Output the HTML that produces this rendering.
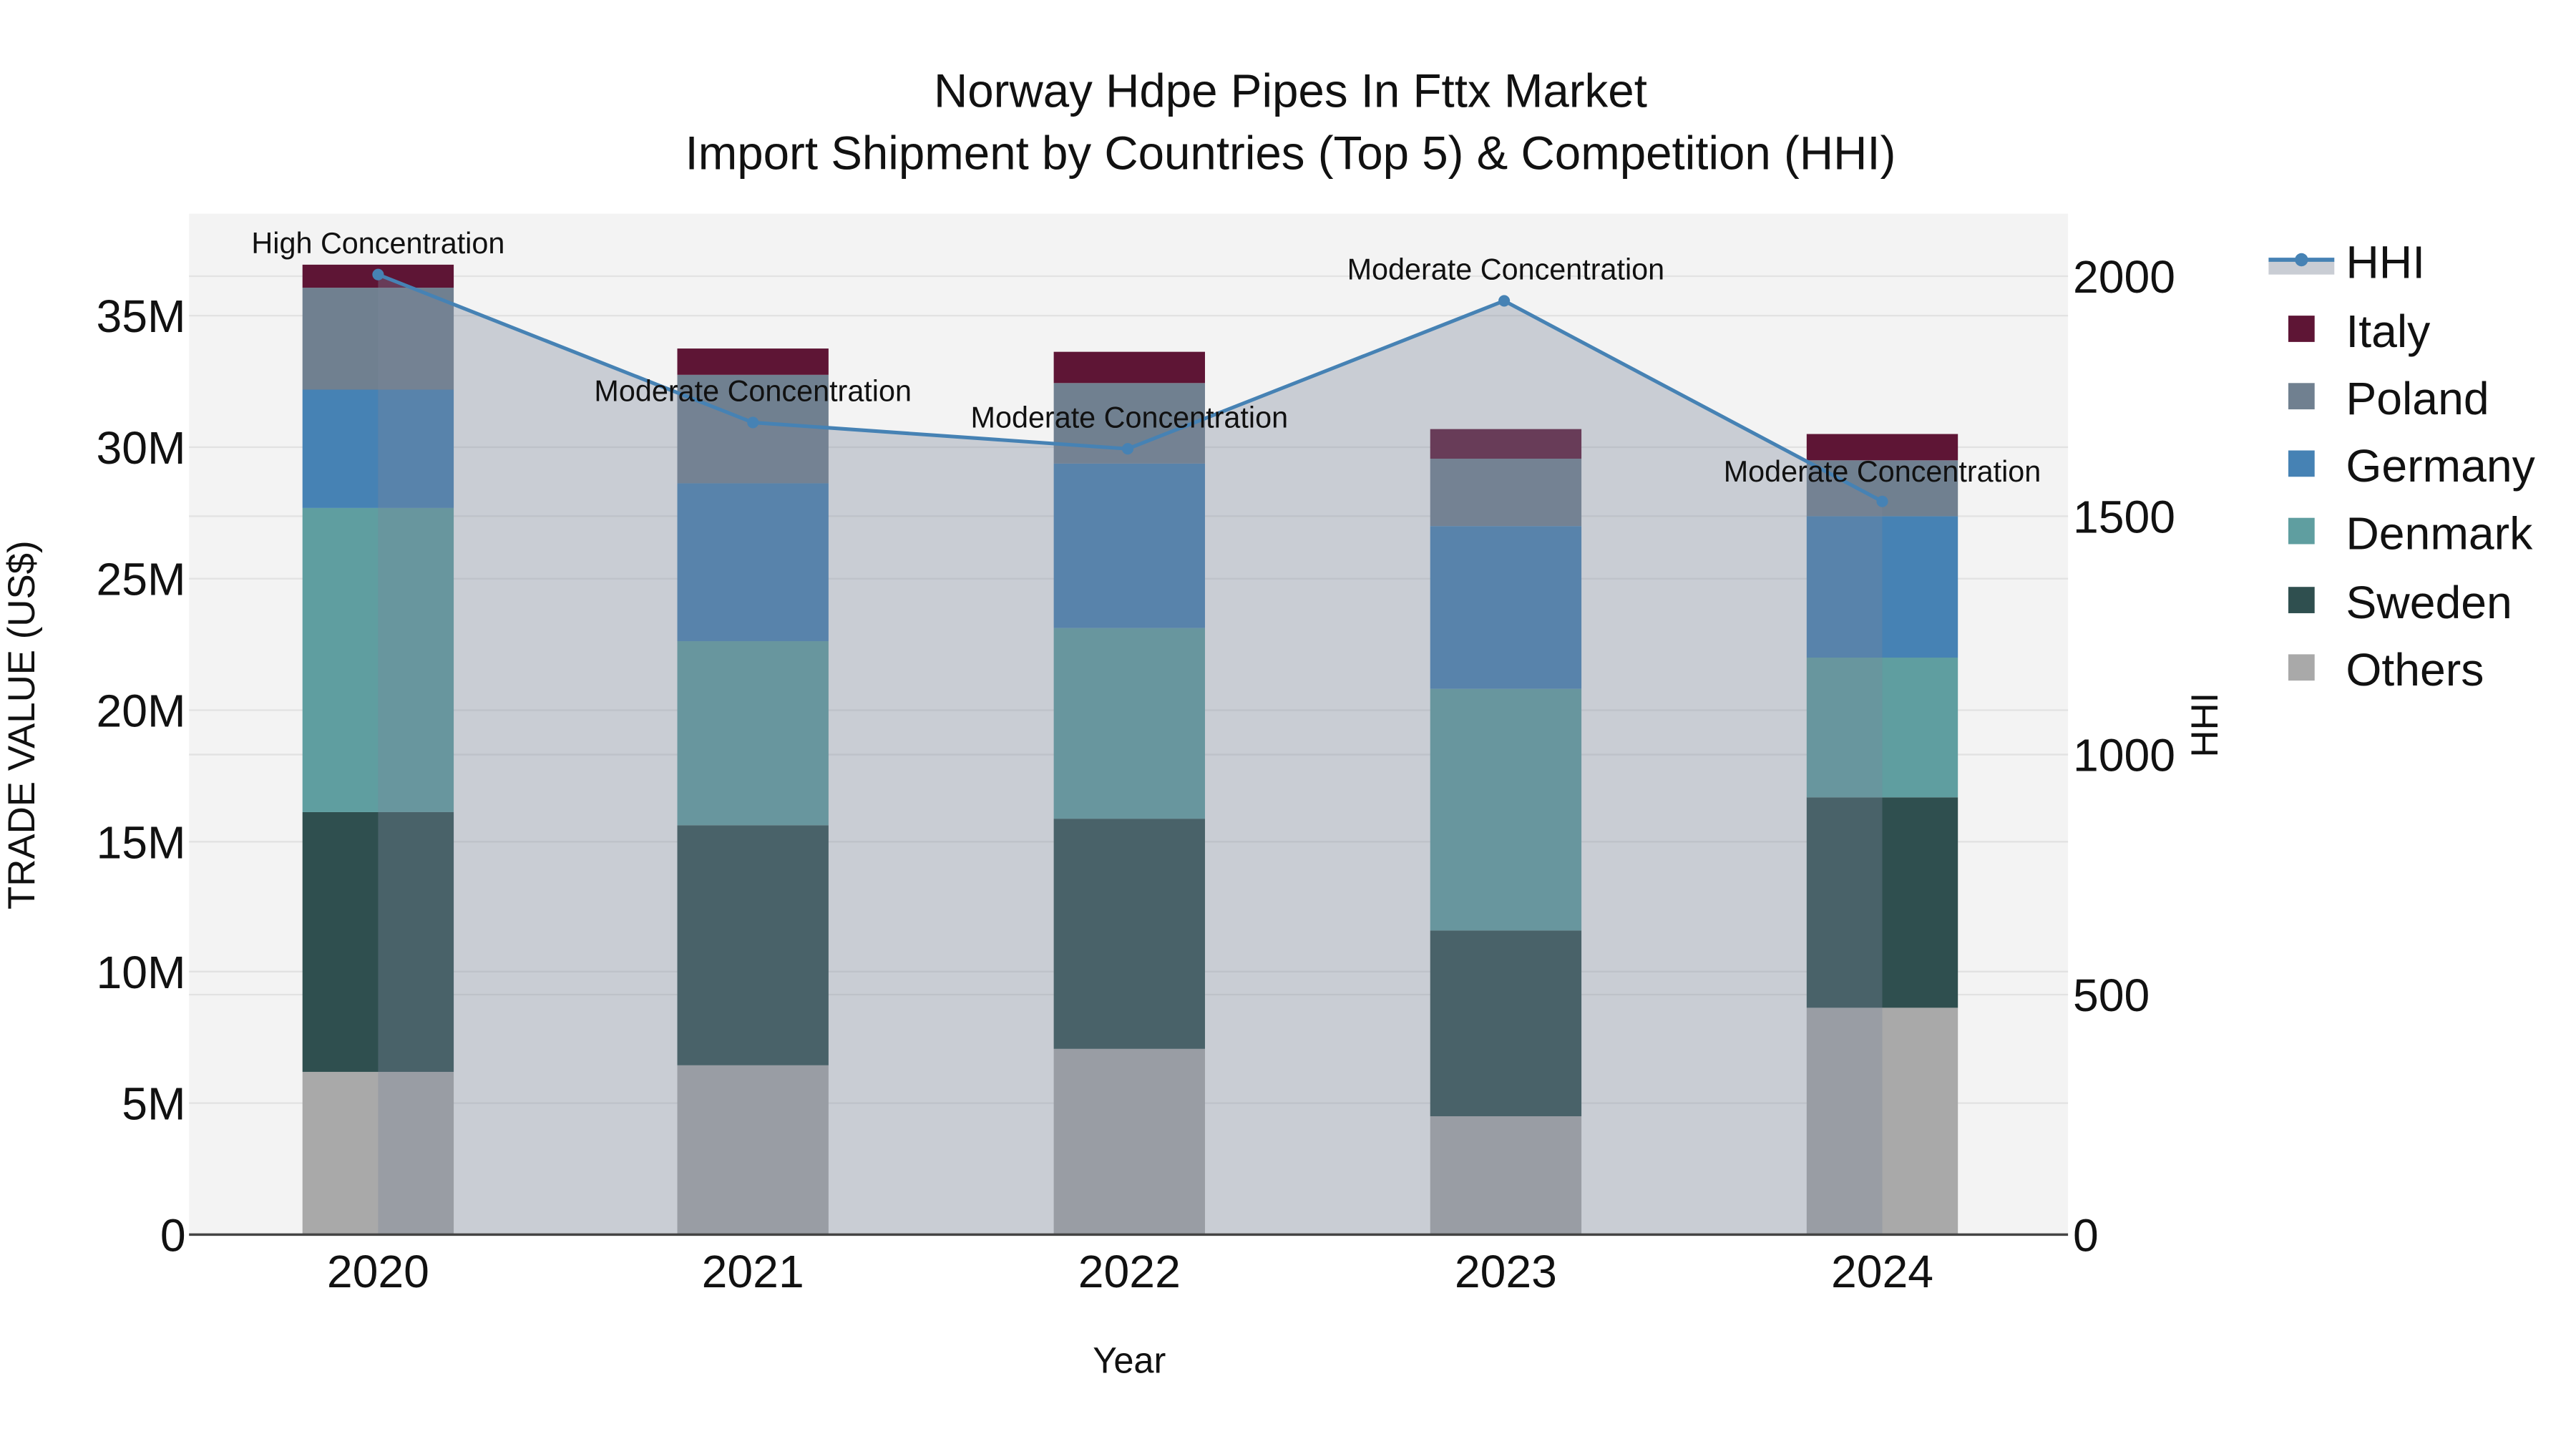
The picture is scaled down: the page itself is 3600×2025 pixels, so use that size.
<!DOCTYPE html>
<html><head><meta charset="utf-8"><style>html,body{margin:0;padding:0;background:#fff}svg{display:block}text{font-family:"Liberation Sans",sans-serif;fill:#111}</style></head>
<body>
<svg width="3600" height="2025" viewBox="0 0 1567 881.4" preserveAspectRatio="none" xmlns="http://www.w3.org/2000/svg">
<rect x="0" y="0" width="1567" height="881.4" fill="#fff"/>
<rect x="115" y="130" width="1143" height="621" fill="#f3f3f3"/>
<g stroke="#e2e2e2" stroke-width="1">
<line x1="115" y1="671" x2="1258" y2="671"/><line x1="115" y1="591" x2="1258" y2="591"/><line x1="115" y1="512" x2="1258" y2="512"/><line x1="115" y1="432" x2="1258" y2="432"/><line x1="115" y1="352" x2="1258" y2="352"/><line x1="115" y1="272" x2="1258" y2="272"/><line x1="115" y1="192" x2="1258" y2="192"/>
<line x1="115" y1="605" x2="1258" y2="605"/><line x1="115" y1="459" x2="1258" y2="459"/><line x1="115" y1="314" x2="1258" y2="314"/><line x1="115" y1="168" x2="1258" y2="168"/>
</g>
<g>
<rect x="184" y="652" width="92" height="99" fill="#a9a9a9"/><rect x="184" y="494" width="92" height="158" fill="#2f4f4f"/><rect x="184" y="309" width="92" height="185" fill="#5f9ea0"/><rect x="184" y="237" width="92" height="72" fill="#4682b4"/><rect x="184" y="175" width="92" height="62" fill="#708090"/><rect x="184" y="161" width="92" height="14" fill="#5e1535"/>
<rect x="412" y="648" width="92" height="103" fill="#a9a9a9"/><rect x="412" y="502" width="92" height="146" fill="#2f4f4f"/><rect x="412" y="390" width="92" height="112" fill="#5f9ea0"/><rect x="412" y="294" width="92" height="96" fill="#4682b4"/><rect x="412" y="228" width="92" height="66" fill="#708090"/><rect x="412" y="212" width="92" height="16" fill="#5e1535"/>
<rect x="641" y="638" width="92" height="113" fill="#a9a9a9"/><rect x="641" y="498" width="92" height="140" fill="#2f4f4f"/><rect x="641" y="382" width="92" height="116" fill="#5f9ea0"/><rect x="641" y="282" width="92" height="100" fill="#4682b4"/><rect x="641" y="233" width="92" height="49" fill="#708090"/><rect x="641" y="214" width="92" height="19" fill="#5e1535"/>
<rect x="870" y="679" width="92" height="72" fill="#a9a9a9"/><rect x="870" y="566" width="92" height="113" fill="#2f4f4f"/><rect x="870" y="419" width="92" height="147" fill="#5f9ea0"/><rect x="870" y="320" width="92" height="99" fill="#4682b4"/><rect x="870" y="279" width="92" height="41" fill="#708090"/><rect x="870" y="261" width="92" height="18" fill="#5e1535"/>
<rect x="1099" y="613" width="92" height="138" fill="#a9a9a9"/><rect x="1099" y="485" width="92" height="128" fill="#2f4f4f"/><rect x="1099" y="400" width="92" height="85" fill="#5f9ea0"/><rect x="1099" y="314" width="92" height="86" fill="#4682b4"/><rect x="1099" y="280" width="92" height="34" fill="#708090"/><rect x="1099" y="264" width="92" height="16" fill="#5e1535"/>
</g>
<polygon points="230,751 230,167 458,257 686,273 915,183 1145,305 1145,751" fill="rgba(123,134,154,0.35)"/>
<polyline points="230,167 458,257 686,273 915,183 1145,305" fill="none" stroke="#4682b4" stroke-width="2.2"/>
<g fill="#4682b4"><circle cx="230" cy="167" r="3.5"/><circle cx="458" cy="257" r="3.5"/><circle cx="686" cy="273" r="3.5"/><circle cx="915" cy="183" r="3.5"/><circle cx="1145" cy="305" r="3.5"/></g>
<line x1="115" y1="751" x2="1258" y2="751" stroke="#444" stroke-width="1.5"/>
<g font-size="18" text-anchor="middle">
<text x="230" y="154">High Concentration</text>
<text x="458" y="244">Moderate Concentration</text>
<text x="687" y="260">Moderate Concentration</text>
<text x="916" y="170">Moderate Concentration</text>
<text x="1145" y="293">Moderate Concentration</text>
</g>
<g font-size="28" text-anchor="end">
<text x="113" y="761">0</text><text x="113" y="681">5M</text><text x="113" y="601">10M</text><text x="113" y="522">15M</text><text x="113" y="442">20M</text><text x="113" y="362">25M</text><text x="113" y="282">30M</text><text x="113" y="202">35M</text>
</g>
<g font-size="28">
<text x="1261" y="761">0</text><text x="1261" y="615">500</text><text x="1261" y="469">1000</text><text x="1261" y="324">1500</text><text x="1261" y="178">2000</text>
</g>
<g font-size="28" text-anchor="middle">
<text x="230" y="783">2020</text><text x="458" y="783">2021</text><text x="687" y="783">2022</text><text x="916" y="783">2023</text><text x="1145" y="783">2024</text>
</g>
<text x="687" y="835" font-size="22" text-anchor="middle">Year</text>
<text transform="translate(21,441) rotate(-90)" font-size="23" text-anchor="middle">TRADE VALUE (US$)</text>
<text transform="translate(1349,441) rotate(-90)" font-size="23" text-anchor="middle">HHI</text>
<text x="785" y="65" font-size="28.5" text-anchor="middle">Norway Hdpe Pipes In Fttx Market</text>
<text x="785" y="103" font-size="28.5" text-anchor="middle">Import Shipment by Countries (Top 5) &amp; Competition (HHI)</text>
<g>
<rect x="1380" y="159" width="40" height="8" fill="#c9cdd4"/>
<line x1="1380" y1="158" x2="1420" y2="158" stroke="#4682b4" stroke-width="2.5"/><circle cx="1400" cy="158" r="4" fill="#4682b4"/>
<rect x="1392" y="192" width="16" height="16" fill="#5e1535"/>
<rect x="1392" y="233" width="16" height="16" fill="#708090"/>
<rect x="1392" y="274" width="16" height="16" fill="#4682b4"/>
<rect x="1392" y="315" width="16" height="16" fill="#5f9ea0"/>
<rect x="1392" y="357" width="16" height="16" fill="#2f4f4f"/>
<rect x="1392" y="398" width="16" height="16" fill="#a9a9a9"/>
</g>
<g font-size="28">
<text x="1427" y="169">HHI</text><text x="1427" y="211">Italy</text><text x="1427" y="252">Poland</text><text x="1427" y="293">Germany</text><text x="1427" y="334">Denmark</text><text x="1427" y="376">Sweden</text><text x="1427" y="417">Others</text>
</g>
</svg>
</body></html>
